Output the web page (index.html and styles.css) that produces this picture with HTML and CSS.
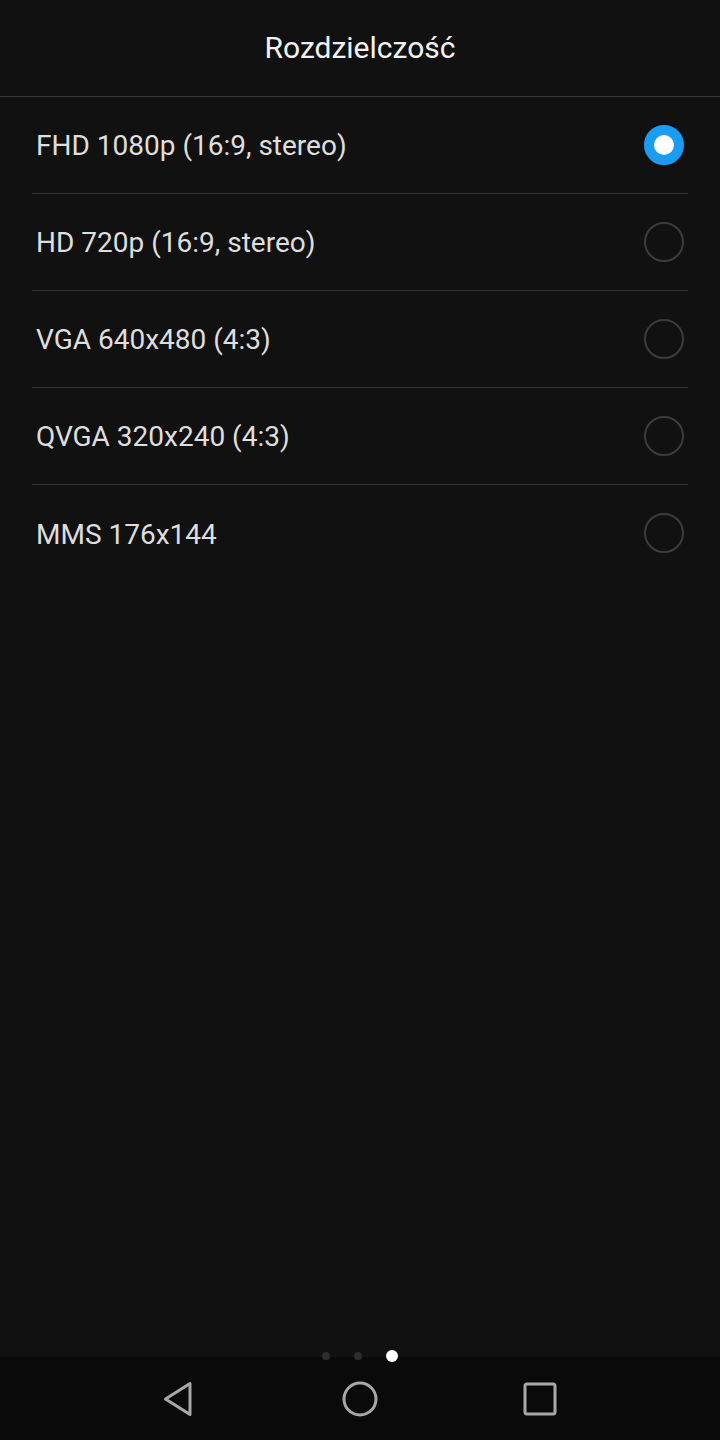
FILE: index.html
```html
<!DOCTYPE html>
<html lang="pl">
<head>
<meta charset="utf-8">
<link rel="stylesheet" href="styles.css">
</head>
<body>
<div class="screen">
  <header class="header">Rozdzielczość</header>
  <ul class="list">
    <li class="row"><span class="label">FHD 1080p (16:9, stereo)</span><span class="radio checked"></span></li>
    <li class="row"><span class="label">HD 720p (16:9, stereo)</span><span class="radio"></span></li>
    <li class="row"><span class="label">VGA 640x480 (4:3)</span><span class="radio"></span></li>
    <li class="row"><span class="label">QVGA 320x240 (4:3)</span><span class="radio"></span></li>
    <li class="row last"><span class="label">MMS 176x144</span><span class="radio"></span></li>
  </ul>
  <div class="spacer"></div>
  <div class="dots"><span class="dot"></span><span class="dot"></span><span class="dot active"></span></div>
  <nav class="navbar">
    <svg class="nav-icon" width="40" height="40" viewBox="0 0 40 40"><path d="M30 4.5 L30 35.5 L5.5 20 Z" fill="none" stroke="#a8a8a8" stroke-width="3" stroke-linejoin="round"/></svg>
    <svg class="nav-icon" width="40" height="40" viewBox="0 0 40 40"><circle cx="20" cy="20" r="16" fill="none" stroke="#a8a8a8" stroke-width="3"/></svg>
    <svg class="nav-icon" width="40" height="40" viewBox="0 0 40 40"><rect x="5" y="5" width="30" height="30" rx="2" fill="none" stroke="#a8a8a8" stroke-width="3"/></svg>
  </nav>
</div>
</body>
</html>
```
FILE: styles.css
```css
* { box-sizing: border-box; }
html, body { margin: 0; padding: 0; background: #111111; }
body { font-family: Roboto, "Noto Sans", sans-serif; }
.screen { width: 720px; height: 1440px; display: flex; flex-direction: column; background: #111111; }
.header {
  height: 97px; display: flex; align-items: center; justify-content: center;
  color: #f2f2f2; font-size: 30px; border-bottom: 1px solid #3a3a3a; padding-bottom: 2px;
}
.list { list-style: none; margin: 0; padding: 0 32px; }
.row {
  height: 97px; display: flex; align-items: center; justify-content: space-between;
  border-bottom: 1px solid #333333; padding: 0 4px 0 4px;
}
.row.last { border-bottom: none; }
.label { color: #dedede; font-size: 28px; padding-top: 1px; }
.radio {
  width: 40px; height: 40px; border-radius: 50%; border: 2px solid #3c3c3c; margin-top: -1px;
}
.radio.checked {
  border: 10px solid #1a9cf2; background: #ffffff;
}
.spacer { flex: 1; }
.dots { height: 12px; display: flex; justify-content: center; align-items: center; margin-bottom: -5px; position: relative; z-index: 1; }
.dot { width: 8px; height: 8px; border-radius: 50%; background: #2e2e2e; margin: 0 12px; }
.dot.active { width: 12px; height: 12px; background: #ffffff; }
.navbar {
  height: 83px; background: #0a0a0a; display: flex; justify-content: center; align-items: center; gap: 140px;
}
.nav-icon { display: block; }
```
